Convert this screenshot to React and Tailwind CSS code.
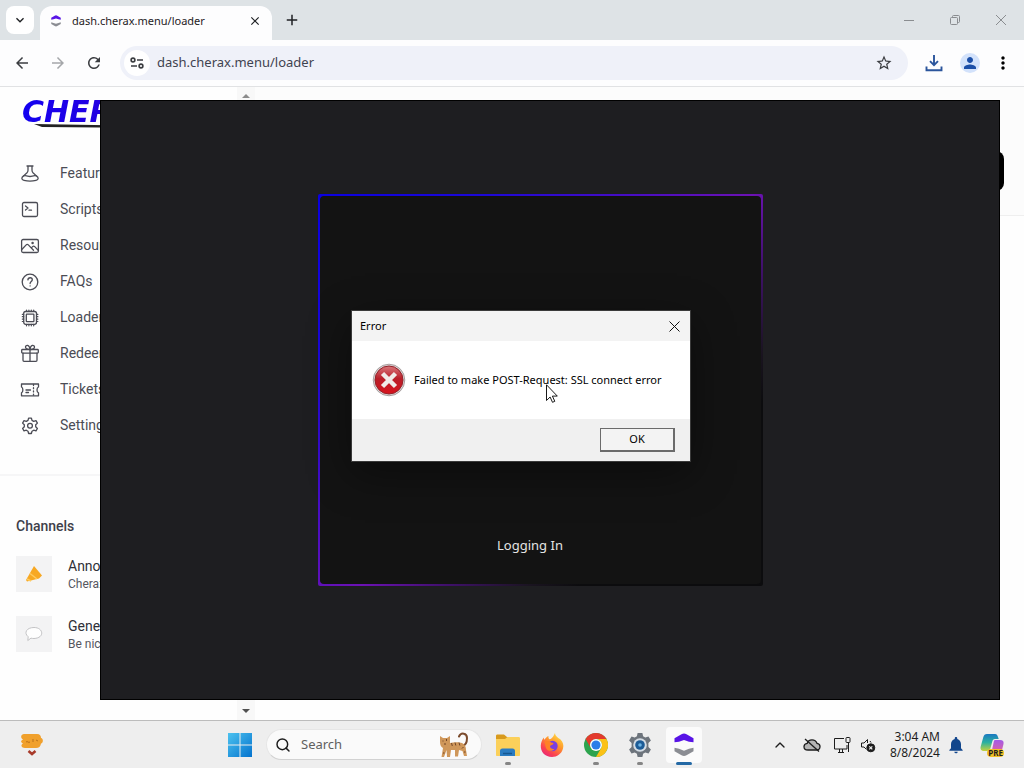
import React from 'react';
import {
    MdArrowBack,
    MdArrowForward,
    MdRefresh,
    MdStarOutline,
    MdPerson,
    MdMoreVert,
    MdKeyboardArrowDown,
    MdAdd,
    MdClose,
    MdNotifications,
} from 'react-icons/md';
import { ChevronUp, Search } from 'lucide-react';

const LineIcon = ({ children }) => (
    <svg
        viewBox="0 0 20 20"
        className="h-5 w-5 shrink-0"
        fill="none"
        stroke="currentColor"
        strokeWidth="1.3"
        strokeLinecap="round"
        strokeLinejoin="round"
        aria-hidden="true"
    >
        {children}
    </svg>
);

const FlaskIcon = () => (
    <LineIcon>
        <path d="M7 3h6M8 3v4.200c0 1-.3 1.800-1 2.500l-3.400 3.200M12 3v4.200c0 1 .3 1.800 1 2.500l3.400 3.200" />
        <path d="M3.600 12.900c-2.400 1.600-2.400 3.900.4 4.500 4 .9 8 .9 12 0 2.800-.6 2.800-2.900.4-4.500-2.400-.9-4.400.6-6.400.6s-4-1.500-6.400-.6z" />
    </LineIcon>
);

const TerminalIcon = () => (
    <LineIcon>
        <rect x="2.500" y="3.500" width="15" height="14" rx="1.500" />
        <path d="M5.500 7l2.500 2-2.500 2M9 11.200h2.500" />
    </LineIcon>
);

const PhotoIcon = () => (
    <LineIcon>
        <rect x="1.600" y="4.500" width="16.800" height="13" rx="1.500" />
        <path d="M1.800 14.500l4.400-4.600c.6-.6 1.500-.6 2.100 0l5.200 5.300M11.300 12.900l1.300-1.300c.6-.6 1.500-.6 2.100 0l3.500 3.600" />
        <circle cx="12.600" cy="7.900" r=".6" />
    </LineIcon>
);

const HelpIcon = () => (
    <LineIcon>
        <circle cx="10" cy="11" r="7.800" />
        <path d="M7.900 8.900c.2-2.900 4.400-2.800 4.400-.1 0 1.700-2.200 1.900-2.200 3.700M10.100 14.800v.1" />
    </LineIcon>
);

const ChipIcon = () => (
    <LineIcon>
        <rect x="3.700" y="4.500" width="12.800" height="12.800" rx="2" />
        <rect x="6.300" y="7.100" width="7.600" height="7.600" rx=".6" />
        <path
            d="M6.500 3v1.500M8.900 3v1.500M11.300 3v1.500M13.700 3v1.500M6.500 17.300v1.500M8.900 17.300v1.500M11.300 17.300v1.500M13.700 17.300v1.500M2.300 7.300h1.400M2.300 9.700h1.400M2.300 12.100h1.400M2.300 14.500h1.400M16.500 7.300h1.400M16.500 9.700h1.400M16.500 12.100h1.400M16.500 14.500h1.400"
            strokeWidth="1.200"
        />
    </LineIcon>
);

const GiftIcon = () => (
    <LineIcon>
        <rect x="1.700" y="6.500" width="16.600" height="3.600" rx=".8" />
        <path d="M3 10.100v7.200c0 .6.400 1 1 1h12c.6 0 1-.4 1-1v-7.200M10 6.500v11.800" />
        <path d="M10 6.500C6.500 6.500 5.500 5.500 5.500 4.100 5.500 1.500 9.500 1.300 10 6.500c.5-5.200 4.500-5 4.500-2.400C14.500 5.500 13.500 6.500 10 6.500" />
    </LineIcon>
);

const TicketIcon = () => (
    <LineIcon>
        <path d="M1.500 5h17v3c-2 .8-2 5 0 5.800v3h-17v-3c1.800-.8 1.800-5 0-5.800z" />
        <path d="M6 11h4.500M6 13.500h2.500" />
        <path d="M13.500 5.500v11" strokeDasharray="1 2.200" />
    </LineIcon>
);

const GearIcon = () => (
    <LineIcon>
        <path d="M8.600 3.100h2.800l.6 2.300 1.700 1 2.300-.7 1.400 2.400-1.700 1.700v2l1.700 1.700-1.400 2.400-2.300-.7-1.700 1-.6 2.300H8.600L8 16.200l-1.700-1-2.300.7-1.400-2.400 1.700-1.700v-2L2.600 8.100 4 5.700l2.300.7 1.700-1z" />
        <circle cx="10" cy="10.800" r="2.400" />
    </LineIcon>
);

const CheraxIcon = ({ className }) => (
    <svg viewBox="0 0 20 24" className={className} aria-hidden="true">
        <path d="M.5 9.300v-4l7-4a5 5 0 0 1 5 0l7 4v4l-4.500-.6L10 7l-5 1.700z" fill="#5814e6" />
        <path d="M.5 14.700v3.500l7 4a5 5 0 0 0 5 0l7-4v-3.500l-4.500 1.100L10 17.700l-5-1.900z" fill="#8b8d93" />
    </svg>
);

const NAV_ITEMS = [
    { label: 'Features', Icon: FlaskIcon },
    { label: 'Scripts', Icon: TerminalIcon },
    { label: 'Resources', Icon: PhotoIcon },
    { label: 'FAQs', Icon: HelpIcon },
    { label: 'Loader', Icon: ChipIcon },
    { label: 'Redeem', Icon: GiftIcon },
    { label: 'Tickets', Icon: TicketIcon },
    { label: 'Settings', Icon: GearIcon },
];

const TabStrip = () => (
    <div className="flex h-10 bg-[#dee3e6] pl-1.5 text-[#1f2124]">
        <button
            type="button"
            aria-label="Search tabs"
            className="mt-1.5 mr-1.5 flex h-7 w-7 items-center justify-center rounded-lg bg-white"
        >
            <MdKeyboardArrowDown className="h-4 w-4" />
        </button>
        <div className="mt-1.5 flex w-[232px] items-center gap-2.5 rounded-t-xl bg-[#fdfdfe] px-2.5 pb-1">
            <CheraxIcon className="h-3 w-3" />
            <span className="flex-1 text-[11px] whitespace-nowrap">dash.cherax.menu/loader</span>
            <button type="button" aria-label="Close tab">
                <MdClose className="h-3.5 w-3.5" />
            </button>
        </div>
        <button
            type="button"
            aria-label="New tab"
            className="ml-1.5 flex w-7 items-center justify-center"
        >
            <MdAdd className="h-[18px] w-[18px]" />
        </button>
        <div className="ml-auto flex text-[#8a8d90]">
            <button
                type="button"
                aria-label="Minimize"
                className="flex w-[46px] items-center justify-center"
            >
                <span className="h-px w-2.5 bg-[#8a8d90]" />
            </button>
            <button
                type="button"
                aria-label="Restore"
                className="flex w-[46px] items-center justify-center"
            >
                <svg viewBox="0 0 10 10" className="h-2.5 w-2.5" fill="none" stroke="currentColor">
                    <rect x=".5" y="2.500" width="7" height="7" rx="1" />
                    <path d="M2.500 2V1.500a1 1 0 0 1 1-1h5a1 1 0 0 1 1 1v5a1 1 0 0 1-1 1H8" />
                </svg>
            </button>
            <button
                type="button"
                aria-label="Close window"
                className="flex w-[46px] items-center justify-center"
            >
                <svg viewBox="0 0 10 10" className="h-2.5 w-2.5" stroke="currentColor">
                    <path d="M0 0l10 10M10 0L0 10" />
                </svg>
            </button>
        </div>
    </div>
);

const Toolbar = () => (
    <div className="flex h-[47px] items-center border-b border-[#e1e2e4] bg-[#fdfdfe] pr-1.5 pl-1 text-[#3b3d41]">
        <button type="button" aria-label="Back" className="flex w-9 justify-center">
            <MdArrowBack className="h-[18px] w-[18px]" />
        </button>
        <button
            type="button"
            aria-label="Forward"
            className="flex w-9 justify-center text-[#a5a7aa]"
        >
            <MdArrowForward className="h-[18px] w-[18px]" />
        </button>
        <button type="button" aria-label="Reload" className="flex w-9 justify-center">
            <MdRefresh className="h-[18px] w-[18px]" />
        </button>
        <div className="mr-2 ml-2 flex h-[34px] flex-1 items-center rounded-full bg-[#eff1f9] px-1">
            <button
                type="button"
                aria-label="Site information"
                className="flex h-[26px] w-[26px] items-center justify-center rounded-full bg-white"
            >
                <svg
                    viewBox="0 0 14 12"
                    className="h-3 w-3.5"
                    fill="none"
                    stroke="currentColor"
                    strokeWidth="1.6"
                >
                    <circle cx="3" cy="3" r="1.900" />
                    <path d="M7 3h6M1 9h6" />
                    <circle cx="11" cy="9" r="1.900" />
                </svg>
            </button>
            <input
                type="text"
                aria-label="Address"
                defaultValue="dash.cherax.menu/loader"
                className="ml-[7px] min-w-0 flex-1 bg-transparent text-[13px] text-[#3f4350] outline-none"
            />
            <button type="button" aria-label="Bookmark" className="mr-[11px]">
                <MdStarOutline className="h-[18px] w-[18px]" />
            </button>
        </div>
        <button
            type="button"
            aria-label="Downloads"
            className="flex w-9 justify-center text-[#2b559c]"
        >
            <svg
                viewBox="0 0 18 18"
                className="h-[18px] w-[18px]"
                fill="none"
                stroke="currentColor"
                strokeWidth="1.900"
            >
                <path d="M9 1v10M5 7.200l4 4 4-4M1.500 12.500v3.700h15v-3.700" />
            </svg>
        </button>
        <button type="button" aria-label="Profile" className="flex w-9 justify-center">
            <span className="flex h-5 w-5 items-center justify-center rounded-full bg-[#d3e2fb] text-[#1c4fa8]">
                <MdPerson className="h-[18px] w-[18px]" />
            </span>
        </button>
        <button type="button" aria-label="Menu" className="flex w-[30px] justify-center text-black">
            <MdMoreVert className="h-5 w-5" />
        </button>
    </div>
);

const ChannelItem = ({ title, subtitle, children }) => (
    <a href="#" className="flex gap-4">
        <span className="flex h-9 w-9 items-center justify-center bg-[#f3f3f4]">
            {children}
        </span>
        <span className="flex flex-col whitespace-nowrap">
            <span className="text-sm leading-5 text-[#2f3038]">{title}</span>
            <span className="text-xs leading-4 text-[#55565e]">{subtitle}</span>
        </span>
    </a>
);

const Sidebar = () => (
    <aside className="w-[237px] font-['Roboto',sans-serif]">
        <div className="h-[68px] pt-[13px] pl-[22px]">
            <div className="bg-linear-to-r from-[#1200f0] via-[#2300e0] via-40% to-[#7a10d8] bg-clip-text font-['DejaVu_Sans',sans-serif] text-[30px] leading-6 font-bold text-transparent italic">
                CHERAX
            </div>
            <svg viewBox="0 0 180 6" className="ml-3 h-1.5 w-[180px]" aria-hidden="true">
                <path d="M0 0l180 3v1.500L8 3z" fill="#222" />
            </svg>
        </div>
        <nav className="border-b-2 border-[#f6f6f7] pb-[31px]">
            {NAV_ITEMS.map(({ label, Icon }) => (
                <a
                    key={label}
                    href="#"
                    className="flex h-9 items-center gap-5 pl-5 text-sm text-[#4b4c55]"
                >
                    <Icon />
                    {label}
                </a>
            ))}
        </nav>
        <section className="px-4 pt-10">
            <h2 className="text-sm leading-5 font-medium text-[#3f404a]">Channels</h2>
            <div className="mt-5 flex flex-col gap-6">
                <ChannelItem title="Announcements" subtitle="Cherax announcements">
                    <svg viewBox="0 0 18 18" className="h-[18px] w-[18px]">
                        <path d="M9 1l8 9.500-3 3L2 16.500 1 15z" fill="#f7a823" />
                        <path d="M5 8.500l7 5.500M2 14l4 2" stroke="#ffca5c" strokeWidth="1.500" />
                    </svg>
                </ChannelItem>
                <ChannelItem title="General" subtitle="Be nice to each other">
                    <svg
                        viewBox="0 0 18 18"
                        className="h-[18px] w-[18px]"
                        fill="#fefefe"
                        stroke="#c3c3c5"
                    >
                        <path d="M9 2.500c9.500 0 11 10.500 0 11-1.200 0-2-.1-3-.4L2.800 15.500l.4-3.800C-1.500 8 1.500 2.500 9 2.500z" />
                    </svg>
                </ChannelItem>
            </div>
        </section>
    </aside>
);

const WebPage = () => (
    <main className="flex flex-1 bg-[#fefefe]">
        <Sidebar />
        <div className="flex w-[18px] flex-col items-center justify-between bg-[#f8f8f8] py-1.5">
            <svg viewBox="0 0 8 5" className="h-[5px] w-2">
                <path d="M0 5l4-4 4 4z" fill="#8b8b8b" />
            </svg>
            <svg viewBox="0 0 8 5" className="h-[5px] w-2">
                <path d="M0 0l4 4 4-4z" fill="#505050" />
            </svg>
        </div>
        <div className="flex-1">
            <header className="flex h-[129px] items-end justify-end border-b border-[#efefef] bg-[#fcfcfc] pr-5 pb-6">
                <button
                    type="button"
                    aria-label="Account"
                    className="h-10 w-24 rounded-lg bg-black"
                />
            </header>
        </div>
    </main>
);

const LoaderWindow = () => (
    <div className="absolute top-[100px] left-[100px] flex h-[600px] w-[900px] items-center justify-center border border-black bg-[#1e1e21] pr-5 pb-5">
        <div className="h-[392px] w-[445px] rounded-xs bg-[linear-gradient(135deg,#0a00e0_0%,#1c08d8_20%,#6c12b4_52%,#40106c_62%,#1a1420_72%,#0c0c0e_78%)] p-0.5">
            <div className="flex h-full items-end justify-center rounded-sm bg-[#131313] pr-5 pb-7">
                <p className="text-[13px] leading-[22px] text-[#e4e4e4]">Logging In</p>
            </div>
        </div>
    </div>
);

const ErrorDialog = () => (
    <div
        role="dialog"
        aria-labelledby="error-title"
        className="absolute top-[310px] left-[351px] w-[340px] border border-[#3a3a3a] bg-white text-[11px] text-black shadow-[0_12px_40px_rgba(0,0,0,0.4)]"
    >
        <div className="flex h-[30px] items-center justify-between bg-[#f3f3f3] pr-2 pl-2">
            <h1 id="error-title">Error</h1>
            <button
                type="button"
                aria-label="Close"
                className="flex h-4 w-4 items-center justify-center"
            >
                <svg viewBox="0 0 11 11" className="h-[11px] w-[11px]" stroke="#111">
                    <path d="M.5.5l10 10M10.500.5l-10 10" />
                </svg>
            </button>
        </div>
        <div className="flex h-[78px] items-center gap-2 pl-5">
            <svg viewBox="0 0 34 34" className="h-[34px] w-[34px] shrink-0">
                <defs>
                    <linearGradient id="error-red" x1="0" y1="0" x2="0" y2="1">
                        <stop offset="0" stopColor="#d9767a" />
                        <stop offset=".45" stopColor="#b91f29" />
                        <stop offset="1" stopColor="#d8121c" />
                    </linearGradient>
                </defs>
                <circle cx="17" cy="17" r="15.800" fill="#d9d4d4" stroke="#9b8f90" strokeWidth=".8" />
                <circle cx="17" cy="17" r="14" fill="url(#error-red)" stroke="#93222a" />
                <path
                    d="M10.500 10.500l13 13M23.500 10.500l-13 13"
                    stroke="#f0ebe8"
                    strokeWidth="4.500"
                />
            </svg>
            <p className="whitespace-nowrap">Failed to make POST-Request: SSL connect error</p>
        </div>
        <div className="flex h-[42px] items-center justify-end bg-[#f0f0f0] pr-[15px]">
            <button
                type="button"
                className="h-6 w-[75px] border border-r-2 border-b-2 border-[#6b6b6b] bg-[#f3f3f3]"
            >
                OK
            </button>
        </div>
    </div>
);

const TaskButton = ({ label, active, running, children }) => (
    <button
        type="button"
        aria-label={label}
        className="relative flex h-12 w-11 items-center justify-center"
    >
        <span
            className={`flex h-9 w-9 items-center justify-center rounded ${
                active ? 'bg-[#fbfbfb]' : ''
            }`}
        >
            {children}
        </span>
        {(active || running) && (
            <span
                className={`absolute bottom-1 h-[3px] rounded-full ${
                    active ? 'w-4 bg-[#2469a5]' : 'w-1.5 bg-[#858585]'
                }`}
            />
        )}
    </button>
);

const CatIcon = () => (
    <svg viewBox="0 0 30 26" className="h-[26px] w-[30px]" fill="none" aria-hidden="true">
        <path
            d="M23 14c4-.5 5-4 5-8 0-5-6-6-8-1.500"
            stroke="#7b4b2d"
            strokeWidth="2"
            strokeLinecap="round"
        />
        <path
            d="M1 4l3 2h4l3-2v7c4-1 9-1 12 0 3 1.500 4 4 4 7l1 6h-3l-1.500-5-3.500-1-1 6.500h-3L16 18h-4l-1 7H8l-.5-7L5 25H2.500l1.500-9c-2-1-3-3-3-6z"
            fill="#cf975a"
        />
        <path
            d="M12.500 11l.8 3M16 10.500l.8 3M20 10.500l.8 3M7.500 7v2M4 8.500v1M24.500 15l-1.500 1.500M5 12h2M4 21h1.500M25 20h1.500"
            stroke="#704527"
            strokeWidth="1"
        />
    </svg>
);

const ExplorerIcon = () => (
    <svg viewBox="0 0 24 24" className="h-6 w-6" aria-hidden="true">
        <path d="M0 3c0-1 .5-1.500 1.500-1.500H8L11 4h4v6H0z" fill="#d89a1d" />
        <path d="M0 6h9l2.500-2H22.500c1 0 1.500.5 1.500 1.500V22c0 .6-.4 1-1 1H1c-.6 0-1-.4-1-1z" fill="#fbd05a" />
        <path d="M4 23v-5c0-1.500.8-2.500 2.500-2.500h10c1.700 0 2.500 1 2.500 2.500v5z" fill="#2a7cc2" />
        <path d="M7 20.500h9" stroke="#155791" strokeWidth="1.500" />
    </svg>
);

const FirefoxIcon = () => (
    <svg viewBox="0 0 24 24" className="h-6 w-6" aria-hidden="true">
        <defs>
            <linearGradient id="fox" x1=".85" y1="0" x2=".2" y2="1">
                <stop offset="0" stopColor="#ffe84a" />
                <stop offset=".4" stopColor="#ff9a2b" />
                <stop offset=".75" stopColor="#fb4350" />
                <stop offset="1" stopColor="#e6257c" />
            </linearGradient>
        </defs>
        <path
            d="M15 0c0 2.500 2 3.500 3.200 5 1 .3 1.600 1 2.300 1.500C23 9 24 12 23 15.500 21.500 21 17 24 12 24 5 24 .5 19 .8 12.500 1 9 2 7 3.800 4.500c0 1 .2 1.600.7 2.200C5.500 5 7 3.500 8.500 3c-.3 1.500.2 2.500 1 3.300C13 5.500 13.500 2.500 15 0z"
            fill="url(#fox)"
        />
        <circle cx="12.500" cy="13" r="5.200" fill="#7a3fe0" />
        <path
            d="M4.500 9c2-1.500 5-1 6.500.5 1 .2 2.300.3 2.500 1-.5 1.500-3 1.500-3.500 2.500 0 2 2 3.500 4.500 2.700-1.500 3-7 3-8.500-.700-.8-2-.5-4-1.500-6z"
            fill="#ff8126"
        />
    </svg>
);

const ChromeIcon = () => (
    <svg viewBox="0 0 24 24" className="h-6 w-6" aria-hidden="true">
        <circle cx="12" cy="12" r="12" fill="#2da44e" />
        <path d="M1.600 6A12 12 0 0 1 22.400 6H12a6 6 0 0 0-5.200 3z" fill="#e33b2e" />
        <path d="M1.600 6l5.200 9A6 6 0 0 1 12 6z" fill="#e33b2e" />
        <path d="M22.400 6A12 12 0 0 1 12 24l5.200-9A6 6 0 0 0 12 6z" fill="#fbc116" />
        <circle cx="12" cy="12" r="6" fill="#fff" />
        <circle cx="12" cy="12" r="4.600" fill="#2b7de9" />
    </svg>
);

const SettingsIcon = () => (
    <svg viewBox="0 0 24 24" className="h-6 w-6" aria-hidden="true">
        <path
            d="M9.600 0h4.800l.7 3.300 2.200 1.200 3.200-1.100 2.400 4.200L20.400 10v4l2.500 2.400-2.400 4.200-3.200-1.100-2.200 1.200-.7 3.300H9.600l-.7-3.300-2.200-1.200-3.200 1.100-2.400-4.200L3.600 14v-4L1.100 7.600l2.400-4.200 3.200 1.100 2.200-1.200z"
            fill="#6d747c"
        />
        <circle cx="12" cy="12" r="6.800" fill="#d5dde5" />
        <circle cx="12" cy="12" r="4.800" fill="#1d5c97" />
        <circle cx="12" cy="12" r="1.800" fill="#6cb4e6" />
    </svg>
);

const CopilotIcon = () => (
    <svg viewBox="0 0 24 24" className="h-6 w-6" aria-hidden="true">
        <defs>
            <linearGradient id="copilot-left" x1="0" y1="0" x2="0" y2="1">
                <stop offset="0" stopColor="#1a78c2" />
                <stop offset=".5" stopColor="#2cb1a0" />
                <stop offset="1" stopColor="#c4d23d" />
            </linearGradient>
            <linearGradient id="copilot-right" x1="0" y1="0" x2="0" y2="1">
                <stop offset="0" stopColor="#a35be8" />
                <stop offset="1" stopColor="#f2668b" />
            </linearGradient>
        </defs>
        <path
            d="M7 1h8c2 0 2.500 1.500 3 3l.7 2H15c-1.700 0-2.300 1-2.700 2.500L10.500 15c-.5 2-1.500 3-3.500 3H4c-2.500 0-4-1.500-3.300-4.500l2.500-9C3.800 2 5 1 7 1z"
            fill="url(#copilot-left)"
        />
        <path
            d="M15 7h5c3 0 4 1.500 3.500 4l-2 8c-.6 2.500-2 4-4.500 4h-6c-2 0-2.800-1-3.200-3 2.500.3 3.700-1 4.200-3l1.500-7c.4-2 .5-3 1.500-3z"
            fill="url(#copilot-right)"
        />
    </svg>
);

const Taskbar = () => (
    <footer className="flex h-12 items-center border-t border-[#bcbcbc] bg-[#eeeeee] text-[#1d1d1d]">
        <div className="w-[218px] pl-5">
            <button type="button" aria-label="Widgets" className="block">
                <svg viewBox="0 0 24 24" className="h-6 w-6">
                    <path
                        d="M4 1h13c3 0 4 2 4 4 2.500.5 2.500 5 0 5.500-.5 3-2 4.500-5 4.500H5c-4 0-4.500-3.500-2-4.500C.5 9.500.5 7.500 3 6.500 0 5 1 1 4 1z"
                        fill="#f0a02c"
                    />
                    <path d="M6 9c1.500-1.500 2.500 1.500 4 0M13 6v3M16 7l2 1" stroke="#b9701a" fill="none" />
                    <path d="M8.500 18l3.500 3 3.500-3" stroke="#a83a2a" strokeWidth="2.500" fill="none" />
                </svg>
            </button>
        </div>
        <TaskButton label="Start">
            <svg viewBox="0 0 24 24" className="h-6 w-6 shrink-0">
                <defs>
                    <linearGradient id="start-blue" x1="0" y1="0" x2="1" y2="1">
                        <stop offset="0" stopColor="#4cc2ef" />
                        <stop offset="1" stopColor="#0473ce" />
                    </linearGradient>
                </defs>
                <path
                    d="M0 0h11.500v11.500H0zM12.500 0H24v11.500H12.500zM0 12.500h11.500V24H0zM12.500 12.500H24V24H12.500z"
                    fill="url(#start-blue)"
                />
            </svg>
        </TaskButton>
        <label className="mx-1 flex h-[31px] w-[216px] items-center gap-2.5 rounded-full border border-b-[#d2d2d2] border-[#e6e6e6] bg-[#fafafa] pr-3 pl-2">
            <Search className="h-4 w-4 shrink-0" strokeWidth={2.2} />
            <input
                type="text"
                aria-label="Search"
                placeholder="Search"
                className="min-w-0 flex-1 bg-transparent text-[13px] outline-none placeholder:text-[#606060]"
            />
            <CatIcon />
        </label>
        <TaskButton label="File Explorer" running>
            <ExplorerIcon />
        </TaskButton>
        <TaskButton label="Firefox">
            <FirefoxIcon />
        </TaskButton>
        <TaskButton label="Chrome" running>
            <ChromeIcon />
        </TaskButton>
        <TaskButton label="Settings" running>
            <SettingsIcon />
        </TaskButton>
        <TaskButton label="Cherax" active>
            <CheraxIcon className="h-6 w-5" />
        </TaskButton>
        <div className="ml-auto flex items-center pr-2">
            <button
                type="button"
                aria-label="Show hidden icons"
                className="flex w-8 justify-center"
            >
                <ChevronUp className="h-4 w-4" />
            </button>
            <button type="button" aria-label="OneDrive" className="flex w-8 justify-center">
                <svg viewBox="0 0 18 14" className="h-3.5 w-[18px]" stroke="currentColor" strokeWidth="1.300">
                    <path
                        d="M5 12h8.500c2 0 3.500-1.500 3.500-3.500S15.500 5.500 14 5.300C13.200 3 11.200 1.800 9 1.800S4.800 3 4.200 5.300C2.200 5.500 1 7 1 8.700S2.500 12 5 12z"
                        fill="#b4b4b4"
                    />
                    <path d="M2 1l14 12.500" />
                </svg>
            </button>
            <button type="button" aria-label="Network" className="flex w-7 justify-center">
                <svg viewBox="0 0 18 18" className="h-[18px] w-[18px]" fill="none" stroke="currentColor">
                    <path d="M11 2.500H1.500v10.500h12.500V9M5 16.500h6M6.500 13v3.500M9.500 13v3.500M15.500 7v9" />
                    <rect x="13" y="1.500" width="4" height="5" rx=".8" />
                </svg>
            </button>
            <button type="button" aria-label="Volume" className="flex w-6 justify-center">
                <svg viewBox="0 0 16 16" className="h-4 w-4" fill="none" stroke="currentColor">
                    <path d="M6.500 12.500L4 10H1.500V6H4l3.500-3.500V6M10 4l1 1.500" />
                    <circle cx="10.800" cy="10.800" r="4" fill="currentColor" />
                    <path d="M9.300 9.300l3 3M12.300 9.300l-3 3" stroke="#eeeeee" strokeWidth="1.200" />
                </svg>
            </button>
            <div className="w-[60px] text-right text-xs leading-4 whitespace-nowrap">
                <div>3:04 AM</div>
                <div>8/8/2024</div>
            </div>
            <button
                type="button"
                aria-label="Notifications"
                className="ml-1 flex w-6 justify-center text-[#12468c]"
            >
                <MdNotifications className="h-5 w-5" />
            </button>
            <button
                type="button"
                aria-label="Copilot"
                className="relative flex w-12 justify-center"
            >
                <CopilotIcon />
                <span className="absolute right-3 bottom-0 rounded-sm bg-[#f3c027] px-px text-[8px] leading-2 font-bold">
                    PRE
                </span>
            </button>
        </div>
    </footer>
);

const MouseCursor = () => (
    <svg
        viewBox="0 0 12 19"
        className="absolute top-[384px] left-[546px] h-[19px] w-3"
        aria-hidden="true"
    >
        <path
            d="M.5.8v15.700l3.600-3.500 2.400 5.300 2.300-1-2.400-5.200h4.900z"
            fill="#fff"
            stroke="#000"
            strokeWidth=".9"
        />
    </svg>
);

export default function App() {
    return (
        <div className="relative flex min-h-screen flex-col overflow-hidden font-['Noto_Sans',sans-serif]">
            <TabStrip />
            <Toolbar />
            <WebPage />
            <Taskbar />
            <LoaderWindow />
            <ErrorDialog />
            <MouseCursor />
        </div>
    );
}
